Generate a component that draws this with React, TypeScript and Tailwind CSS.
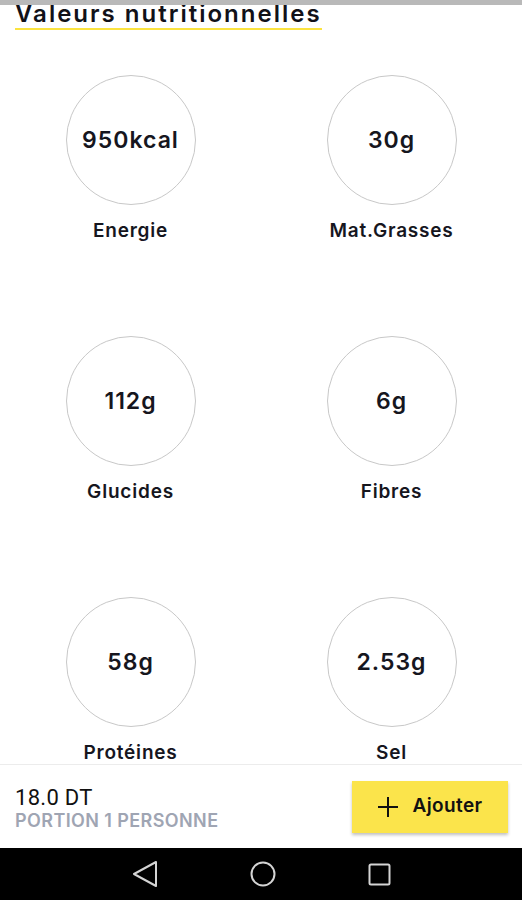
import React from 'react';

const items = [
  { value: '950kcal', label: 'Energie' },
  { value: '30g', label: 'Mat.Grasses' },
  { value: '112g', label: 'Glucides' },
  { value: '6g', label: 'Fibres' },
  { value: '58g', label: 'Protéines' },
  { value: '2.53g', label: 'Sel' },
];

function NutrientCell({ value, label }: { value: string; label: string }) {
  return (
    <div className="flex h-[261px] flex-col items-center">
      <div className="flex h-[130px] w-[130px] items-center justify-center rounded-full border border-[#c8c8c8]">
        <span className="pt-[1px] text-[23px] font-semibold tracking-[1px] text-[#16161e]">{value}</span>
      </div>
      <span className="mt-[14px] text-[19px] leading-6 font-semibold tracking-[0.8px] text-[#16161e]">
        {label}
      </span>
    </div>
  );
}

export default function App() {
  return (
    <div className="relative flex h-[900px] w-[522px] flex-col bg-white font-['Inter',sans-serif]">
      <div className="absolute top-0 left-0 z-10 h-[5px] w-full bg-[#b9b9b9]" />

      <div className="flex-1 overflow-hidden pt-[1px]">
        <div className="px-[15px]">
          <h2 className="inline-block border-b-2 border-[#fbe33f] pb-[1px] text-[24px] leading-[26px] font-semibold tracking-[2px] text-[#111118]">
            Valeurs nutritionnelles
          </h2>
        </div>
        <div className="mt-[45px] grid grid-cols-2">
          {items.map((it) => (
            <NutrientCell key={it.label} value={it.value} label={it.label} />
          ))}
        </div>
      </div>

      <div className="flex h-[84px] items-center justify-between border-t border-[#ececec] pr-[14px] pl-[15px]">
        <div className="flex flex-col pt-[2px]">
          <span className="font-['Roboto',sans-serif] text-[22px] leading-[25px] tracking-[0.3px] text-[#111]">18.0 DT</span>
          <span className="text-[18px] leading-[21px] font-semibold tracking-[0.4px] text-[#9fa5b3]">
            PORTION 1 PERSONNE
          </span>
        </div>
        <button className="flex h-[52px] w-[156px] items-center justify-center gap-[13px] bg-[#fbe44b] shadow-[0_2px_3px_rgba(0,0,0,0.25)]">
          <svg width="22" height="22" viewBox="0 0 22 22" fill="none" stroke="#111" strokeWidth="2">
            <path d="M11 1v20M1 11h20" />
          </svg>
          <span className="text-[19px] font-semibold tracking-[0.4px] text-[#111]">Ajouter</span>
        </button>
      </div>

      <div className="flex h-[52px] items-center justify-center gap-[91px] bg-black">
        <svg width="26" height="28" viewBox="0 0 26 28" fill="none" stroke="#d4d4d4" strokeWidth="2" strokeLinejoin="round">
          <path d="M24 2L2 14l22 12z" />
        </svg>
        <svg width="28" height="28" viewBox="0 0 28 28" fill="none" stroke="#d4d4d4" strokeWidth="2">
          <circle cx="14" cy="14" r="11.5" />
        </svg>
        <svg width="23" height="23" viewBox="0 0 23 23" fill="none" stroke="#d4d4d4" strokeWidth="2">
          <rect x="1.5" y="1.5" width="20" height="20" rx="1.5" />
        </svg>
      </div>
    </div>
  );
}
